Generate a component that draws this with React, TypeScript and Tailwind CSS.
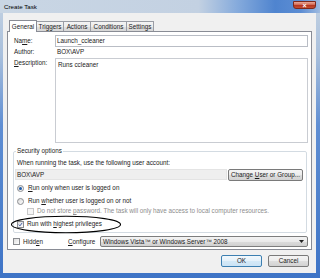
import React from "react";

function U({ children }: { children: React.ReactNode }) {
  return <span className="underline decoration-[0.6px] underline-offset-[1px]">{children}</span>;
}

function Radio({ checked }: { checked?: boolean }) {
  return (
    <span className="w-[7px] h-[7px] rounded-full border border-[#8a8c90] bg-[linear-gradient(135deg,#d8d8d8,#ffffff)] flex items-center justify-center shrink-0">
      {checked && <span className="w-[3px] h-[3px] rounded-full bg-[#1f5ba8]" />}
    </span>
  );
}

function Check({ checked, disabled }: { checked?: boolean; disabled?: boolean }) {
  return (
    <span
      className={
        disabled
          ? "w-[7px] h-[7px] border border-[#c8c8c8] bg-[#f6f6f6] flex items-center justify-center shrink-0"
          : "w-[7px] h-[7px] border border-[#8a8c90] bg-[linear-gradient(135deg,#dcdcdc,#ffffff)] flex items-center justify-center shrink-0"
      }
    >
      {checked && (
        <svg width="7" height="7" viewBox="0 0 7 7">
          <path d="M1.1 3.6 L2.7 5.4 L5.9 1.2" fill="none" stroke="#27469c" strokeWidth="1.2" />
        </svg>
      )}
    </span>
  );
}

const tabBase = "h-[10px] -ml-px border border-b-0 border-[#9a9da5] bg-[linear-gradient(180deg,#f4f4f4_0%,#ececec_50%,#e0e0e0_51%,#d6d6d6_100%)] flex items-center justify-center";

export default function App() {
  return (
    <div className="w-[320px] h-[278px] relative overflow-hidden flex flex-col bg-[linear-gradient(180deg,#c4d2e2_0%,#a8bfdc_20%,#5f8ed3_45%,#3e74c6_100%)] font-['Liberation_Sans',Arial,sans-serif] text-[6.3px] text-[#1a1a1a]">
      {/* title bar */}
      <div className="h-[13px] flex items-start justify-between bg-[linear-gradient(90deg,#c9d6e4_0%,#c3d1e2_62%,#86abdc_74%,#4f84cf_86%,#5c8dd3_94%,#9fbbe0_100%)]">
        <span className="ml-[4px] mt-[3px] leading-[7px] text-[6.2px] text-black">Create Task</span>
        <div className="mt-[1px] mr-[4px] w-[23px] h-[8px] rounded-b-[3px] border border-[#7d2a1d] bg-[linear-gradient(180deg,#e9a898_0%,#d36a54_45%,#b53620_55%,#c44d33_100%)] flex items-center justify-center text-white text-[7px] font-bold leading-none">
          ×
        </div>
      </div>

      {/* client */}
      <div className="ml-[3px] w-[313px] h-[260px] bg-[#f0f0f0] flex flex-col">
        {/* tabs */}
        <div className="flex items-end h-[11px] mt-[7px] ml-[6px]">
          <div className="w-[28px] h-[12px] -mb-px relative z-10 border border-b-0 border-[#898c95] bg-white flex items-center justify-center">
            General
          </div>
          <div className={tabBase + " w-[28px]"}>Triggers</div>
          <div className={tabBase + " w-[28px]"}>Actions</div>
          <div className={tabBase + " w-[37px]"}>Conditions</div>
          <div className={tabBase + " w-[28px]"}>Settings</div>
        </div>

        {/* panel */}
        <div className="ml-[4px] w-[305px] h-[219px] border border-[#898c95] bg-white flex flex-col">
          <div className="flex items-center h-[12px] mt-[3px]">
            <span className="w-[47px] pl-[6px]">
              Na<U>m</U>e:
            </span>
            <div className="w-[253px] h-[12px] border border-[#b9bdc5] flex items-center pl-[1px]">Launch_ccleaner</div>
          </div>
          <div className="flex items-center h-[10px]">
            <span className="w-[47px] pl-[6px]">Author:</span>
            <span className="pl-[2px]">BOX\AVP</span>
          </div>
          <div className="flex items-start h-[85px] mt-[1px]">
            <span className="w-[47px] pl-[6px] pt-[1px] leading-[8px]">
              <U>D</U>escription:
            </span>
            <div className="w-[253px] h-[85px] border border-[#c9ccd2] pl-[2px] pt-[2px] leading-[8px]">Runs ccleaner</div>
          </div>

          <fieldset className="mt-[4px] ml-[5px] w-[294px] border border-[#d3dbe2] rounded-[2px] pb-[4px] flex flex-col">
            <legend className="ml-[2px] px-[1px] leading-[8px]">Security options</legend>
            <div className="h-[8px] mt-[4px] ml-[3px] flex items-center">
              <span>When running the task, use the following user account:</span>
            </div>
            <div className="h-[12px] mt-[2px] flex items-start">
              <div className="ml-[1px] w-[212px] h-[11px] bg-[#efefef] border border-[#e4e4e4] flex items-center pl-[1px]">BOX\AVP</div>
              <div className="ml-[1px] w-[75px] h-[12px] rounded-[2px] border border-[#7a7a7a] bg-[linear-gradient(180deg,#f4f4f4_0%,#ececec_50%,#dedede_51%,#d2d2d2_100%)] flex items-center justify-center">
                <span>
                  Change <U>U</U>ser or Group...
                </span>
              </div>
            </div>
            <div className="h-[8px] mt-[3px] ml-[3px] flex items-center gap-[4px]">
              <Radio checked />
              <span>
                <U>R</U>un only when user is logged on
              </span>
            </div>
            <div className="h-[8px] mt-[5px] ml-[3px] flex items-center gap-[4px]">
              <Radio />
              <span>
                Run <U>w</U>hether user is logged on or not
              </span>
            </div>
            <div className="h-[8px] mt-[2px] ml-[13px] flex items-center gap-[3px] text-[#8d8d8d]">
              <Check disabled />
              <span>
                Do not store <U>p</U>assword. The task will only have access to local computer resources.
              </span>
            </div>
            <div className="h-[8px] mt-[5px] ml-[3px] flex items-center gap-[3px]">
              <Check checked />
              <span>
                Run with <U>h</U>ighest privileges
              </span>
            </div>
          </fieldset>

          <div className="flex items-center h-[11px] mt-[3px]">
            <div className="ml-[5px] w-[55px] flex items-center gap-[3px]">
              <Check />
              <span>
                Hidd<U>e</U>n
              </span>
            </div>
            <span className="w-[32px]">
              <U>C</U>onfigure
            </span>
            <div className="w-[208px] h-[11px] rounded-[2px] border border-[#7d7d7d] bg-[linear-gradient(180deg,#f3f3f3_0%,#eaeaea_50%,#dcdcdc_51%,#d0d0d0_100%)] flex items-center justify-between pl-[2px] pr-[3px]">
              <span>Windows Vista™ or Windows Server™ 2008</span>
              <svg width="5" height="3" viewBox="0 0 5 3">
                <path d="M0 0 L5 0 L2.5 3 Z" fill="#222" />
              </svg>
            </div>
          </div>
        </div>

        {/* buttons */}
        <div className="flex justify-end gap-[6px] mt-[5px] pr-[7px]">
          <div className="w-[41px] h-[12px] rounded-[2px] border border-[#3c7fb1] bg-[linear-gradient(180deg,#f2f8fc_0%,#e4f1fa_50%,#d4e9f7_51%,#cbe3f5_100%)] flex items-center justify-center">
            OK
          </div>
          <div className="w-[41px] h-[12px] rounded-[2px] border border-[#7a7a7a] bg-[linear-gradient(180deg,#f4f4f4_0%,#ececec_50%,#dedede_51%,#d2d2d2_100%)] flex items-center justify-center">
            Cancel
          </div>
        </div>
      </div>

      {/* hand-drawn annotation ellipse */}
      <svg className="absolute left-[10px] top-[215px]" width="112" height="19" viewBox="0 0 112 19">
        <ellipse cx="56" cy="9.5" rx="54.5" ry="8.3" fill="none" stroke="#000" strokeWidth="1.1" />
      </svg>
    </div>
  );
}
